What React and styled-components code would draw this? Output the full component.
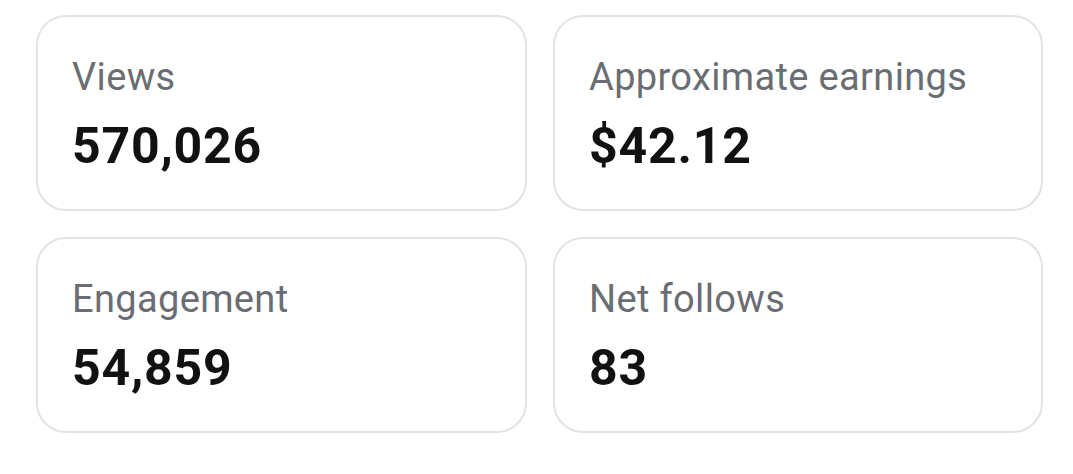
import styled, { createGlobalStyle } from "styled-components";

const GlobalStyle = createGlobalStyle`
  html, body {
    margin: 0;
    padding: 0;
    background: #fff;
  }
  body {
    font-family: Roboto, "Liberation Sans", Arial, sans-serif;
  }
`;

const stats = [
  { label: "Views", value: "570,026" },
  { label: "Approximate earnings", value: "$42.12" },
  { label: "Engagement", value: "54,859" },
  { label: "Net follows", value: "83" },
];

export default function App() {
  return (
    <>
      <GlobalStyle />
      <Grid>
        {stats.map((stat) => (
          <StatCard key={stat.label} label={stat.label} value={stat.value} />
        ))}
      </Grid>
    </>
  );
}

function StatCard({ label, value }) {
  return (
    <Card>
      <Label>{label}</Label>
      <Value>{value}</Value>
    </Card>
  );
}

const Grid = styled.div`
  display: grid;
  grid-template-columns: 491px 490px;
  grid-auto-rows: 196px;
  gap: 26px;
  padding: 15px 30px 0 36px;
`;

const Card = styled.div`
  box-sizing: border-box;
  border: 2px solid #e1e3e6;
  border-radius: 30px;
  background: #fff;
  padding: 38px 20px 0 34px;
  display: flex;
  flex-direction: column;
`;

const Label = styled.div`
  font-size: 38px;
  line-height: 44px;
  letter-spacing: 0.35px;
  color: #6a6e74;
  font-weight: 400;
`;

const Value = styled.div`
  margin-top: 19px;
  font-size: 50px;
  line-height: 56px;
  letter-spacing: 0.8px;
  font-weight: 700;
  color: #111;
`;
